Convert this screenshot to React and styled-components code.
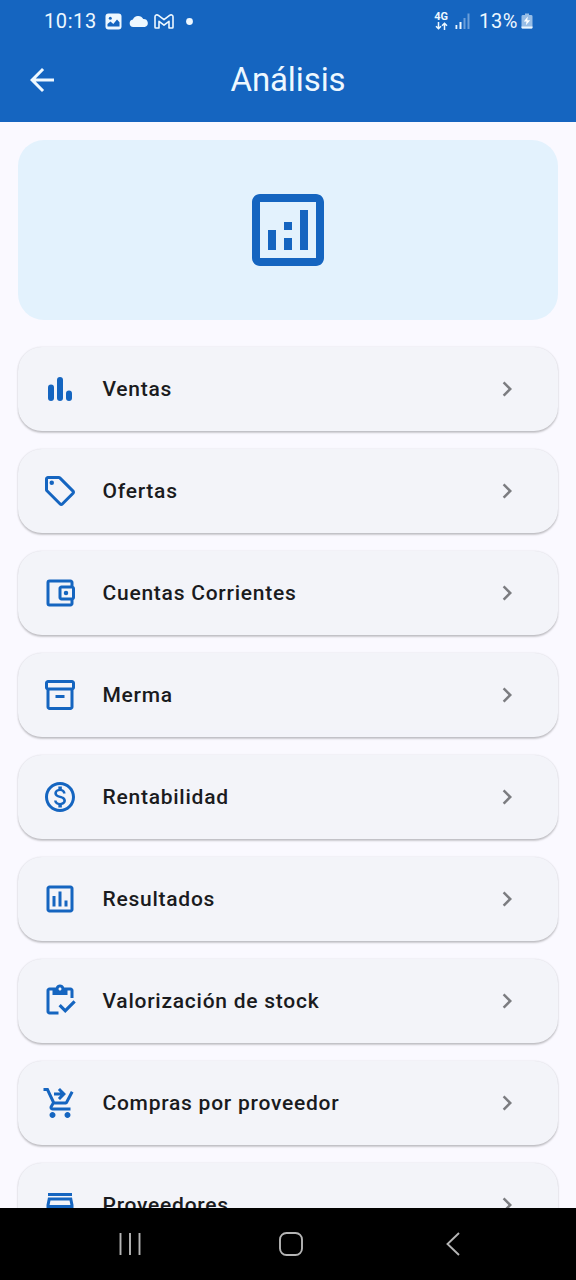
import React from "react";
import styled, { createGlobalStyle } from "styled-components";
import {
  MdArrowBack,
  MdChevronRight,
  MdOutlineAccountBalanceWallet,
  MdOutlineAnalytics,
  MdOutlineAssessment,
  MdOutlineInventory,
  MdOutlineInventory2,
  MdOutlineMonetizationOn,
  MdOutlineSell,
  MdOutlineShoppingCartCheckout,
  MdOutlineStore,
} from "react-icons/md";

const blue = "#1565c0";

const GlobalStyle = createGlobalStyle`
  * { box-sizing: border-box; }
  body {
    margin: 0;
    overflow: hidden;
    font-family: Roboto, "Noto Sans", sans-serif;
  }
  svg { display: block; flex: none; }
`;

const Screen = styled.div`
  display: flex;
  flex-direction: column;
  width: 576px;
  height: 1280px;
  overflow: hidden;
  background: #faf9ff;
`;

const Header = styled.header`
  flex: none;
  height: 122px;
  background: ${blue};
  color: #eef8ff;
`;

const StatusBar = styled.div`
  display: flex;
  align-items: center;
  justify-content: space-between;
  height: 38px;
  padding: 4px 43px 0 44px;
`;

const StatusGroup = styled.div`
  display: flex;
  align-items: center;
`;

const StatusText = styled.span`
  font-size: 20px;
  line-height: 24px;
  letter-spacing: ${(p) => p.$spacing || "0"};
  margin-right: ${(p) => p.$gap || "0"};
`;

const StatusIcon = styled.svg`
  margin-right: ${(p) => p.$gap || "0"};
`;

const NetworkBadge = styled.div`
  display: flex;
  flex-direction: column;
  align-items: center;
  margin-right: 7px;
  font-size: 11px;
  font-weight: 700;
  line-height: 10px;
`;

const TitleBar = styled.div`
  display: grid;
  grid-template-columns: 84px 1fr 84px;
  align-items: center;
  height: 84px;
`;

const BackButton = styled.button`
  display: flex;
  justify-content: center;
  padding: 0;
  border: 0;
  background: none;
  color: inherit;
  font-size: 36px;
`;

const Title = styled.h1`
  margin: 0;
  text-align: center;
  font-size: 33px;
  line-height: 42px;
  font-weight: 400;
  letter-spacing: -0.1px;
`;

const Content = styled.main`
  flex: 1;
  min-height: 0;
  overflow: hidden;
  padding: 18px 18px 0;
`;

const Hero = styled.section`
  display: flex;
  align-items: center;
  justify-content: center;
  height: 180px;
  margin-bottom: 27px;
  border-radius: 26px;
  background: #e3f2fd;
  color: ${blue};
  font-size: 96px;
`;

const List = styled.nav`
  display: flex;
  flex-direction: column;
  gap: 18px;
`;

const Card = styled.a`
  display: flex;
  flex: none;
  align-items: center;
  height: 84px;
  padding: 0 36px 0 24px;
  border-radius: 24px;
  background: #f3f4f9;
  color: #1a1b20;
  box-shadow: 0 1.5px 2px rgba(0, 0, 0, 0.17), 0 0.5px 2px rgba(0, 0, 0, 0.1);
`;

const CardIcon = styled.span`
  width: 36px;
  color: ${blue};
  font-size: 36px;
`;

const CardLabel = styled.span`
  flex: 1;
  margin-left: 24.5px;
  font-size: 21px;
  line-height: 30px;
  font-weight: 500;
  letter-spacing: 0.75px;
`;

const CardChevron = styled.span`
  color: #7b7c80;
  font-size: 30px;
`;

const NavBar = styled.footer`
  display: grid;
  grid-template-columns: 161px 166px auto;
  flex: none;
  align-items: center;
  height: 72px;
  padding-left: 118px;
  background: #000;
`;

const RoundedBars = () => (
  <svg width="36" height="36" viewBox="0 0 24 24" fill="currentColor">
    <rect x="4" y="9" width="4" height="11" rx="2" />
    <rect x="10" y="4" width="4" height="16" rx="2" />
    <rect x="16" y="13" width="4" height="7" rx="2" />
  </svg>
);

const items = [
  ["Ventas", RoundedBars],
  ["Ofertas", MdOutlineSell],
  ["Cuentas Corrientes", MdOutlineAccountBalanceWallet],
  ["Merma", MdOutlineInventory2],
  ["Rentabilidad", MdOutlineMonetizationOn],
  ["Resultados", MdOutlineAssessment],
  ["Valorización de stock", MdOutlineInventory],
  ["Compras por proveedor", MdOutlineShoppingCartCheckout],
  ["Proveedores", MdOutlineStore],
];

const PhotoIcon = () => (
  <StatusIcon $gap="7px" width="17" height="17" viewBox="0 0 17 17">
    <rect x="0.5" y="0.5" width="16" height="16" rx="3" fill="currentColor" />
    <circle cx="5.3" cy="5.2" r="1.5" fill={blue} />
    <path d="M2.5 13.5V11l3-2.5 2.8 2.4L12 6.5l2.5 2.8v4.2z" fill={blue} />
  </StatusIcon>
);

const CloudIcon = () => (
  <StatusIcon $gap="5px" width="20" height="12" viewBox="0 0 19 12" preserveAspectRatio="none">
    <path d="M4 12a3.8 3.8 0 0 1-.3-7.5A5.4 5.4 0 0 1 13.5 4 4.1 4.1 0 0 1 15 12z" fill="currentColor" />
  </StatusIcon>
);

const MailIcon = () => (
  <StatusIcon $gap="12px" width="20" height="15" viewBox="0 0 20 15">
    <path
      d="M1 2.8V13.2a.8.8 0 0 0 .8.8H5V7.3l5 3.9 5-3.9V14h3.2a.8.8 0 0 0 .8-.8V2.8C19 1 17 .4 15.6 1.4L10 5.7 4.4 1.4C3 .4 1 1 1 2.8z"
      fill="none"
      stroke="currentColor"
      strokeWidth="1.6"
      strokeLinejoin="round"
    />
  </StatusIcon>
);

const DotIcon = () => (
  <StatusIcon width="7" height="7" viewBox="0 0 7 7">
    <circle cx="3.5" cy="3.5" r="3.4" fill="currentColor" />
  </StatusIcon>
);

const DataArrows = () => (
  <svg width="13" height="8" viewBox="0 0 13 8" fill="none" stroke="currentColor" strokeWidth="1.5">
    <path d="M3.5 0v7M1 4.2l2.5 2.5L6 4.2M9.5 8V1M7 3.8l2.5-2.5L12 3.8" />
  </svg>
);

const SignalIcon = () => (
  <StatusIcon $gap="9px" width="15" height="16" viewBox="0 0 15 16" fill="currentColor">
    <rect x="0.5" y="12" width="1.8" height="4" />
    <rect x="4.5" y="9" width="2" height="7" />
    <rect x="8.5" y="5" width="2" height="11" opacity="0.4" />
    <rect x="12.5" y="0.5" width="2" height="15.5" opacity="0.4" />
  </StatusIcon>
);

const BatteryIcon = () => (
  <StatusIcon width="12" height="16" viewBox="0 0 12 17" preserveAspectRatio="none">
    <path d="M4 0.5h4V2h2a1.5 1.5 0 0 1 1.5 1.5V15.5a1 1 0 0 1-1 1h-9a1 1 0 0 1-1-1V3.5A1.5 1.5 0 0 1 2 2h2z" fill="currentColor" opacity="0.6" />
    <path d="M0.5 14.3h11v1.2a1 1 0 0 1-1 1h-9a1 1 0 0 1-1-1z" fill="currentColor" />
    <path d="M6.8 3.8L2.8 9h2.7l-.6 4L9.2 7.7H6.3z" fill="#fff" />
  </StatusIcon>
);

const RecentsIcon = () => (
  <svg width="24" height="24" viewBox="0 0 24 24" stroke="#b5b5b5" strokeWidth="1.9">
    <path d="M2.5 1v22M12 1v22M21.5 1v22" />
  </svg>
);

const HomeIcon = () => (
  <svg width="24" height="24" viewBox="0 0 24 24" fill="none" stroke="#b5b5b5" strokeWidth="1.9">
    <rect x="1" y="1" width="22" height="22" rx="6.5" />
  </svg>
);

const NavBackIcon = () => (
  <svg width="16" height="24" viewBox="0 0 16 24" fill="none" stroke="#b5b5b5" strokeWidth="1.9">
    <path d="M14 1L2.5 12 14 23" />
  </svg>
);

export default function App() {
  return (
    <Screen>
      <GlobalStyle />
      <Header>
        <StatusBar>
          <StatusGroup>
            <StatusText $gap="8px" $spacing="0.6px">10:13</StatusText>
            <PhotoIcon />
            <CloudIcon />
            <MailIcon />
            <DotIcon />
          </StatusGroup>
          <StatusGroup>
            <NetworkBadge>
              4G
              <DataArrows />
            </NetworkBadge>
            <SignalIcon />
            <StatusText $gap="3px" $spacing="0.6px">13%</StatusText>
            <BatteryIcon />
          </StatusGroup>
        </StatusBar>
        <TitleBar>
          <BackButton aria-label="Volver">
            <MdArrowBack />
          </BackButton>
          <Title>Análisis</Title>
        </TitleBar>
      </Header>
      <Content>
        <Hero>
          <MdOutlineAnalytics />
        </Hero>
        <List>
          {items.map(([label, Icon]) => (
            <Card key={label}>
              <CardIcon>
                <Icon />
              </CardIcon>
              <CardLabel>{label}</CardLabel>
              <CardChevron>
                <MdChevronRight />
              </CardChevron>
            </Card>
          ))}
        </List>
      </Content>
      <NavBar>
        <RecentsIcon />
        <HomeIcon />
        <NavBackIcon />
      </NavBar>
    </Screen>
  );
}
